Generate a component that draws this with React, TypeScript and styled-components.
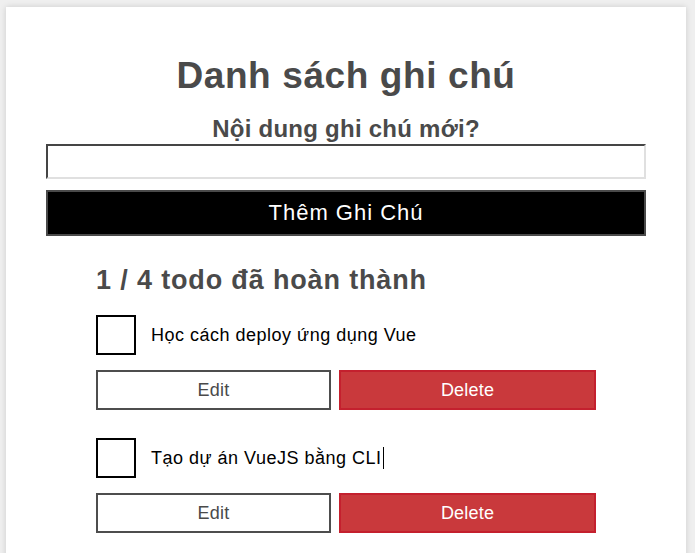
import React from "react";
import styled, { createGlobalStyle } from "styled-components";

const Global = createGlobalStyle`
  html, body { margin: 0; padding: 0; background: #efefef; }
  body { font-family: "Liberation Sans", Arial, sans-serif; }
  * { box-sizing: border-box; }
`;

const Page = styled.div`
  padding: 7px 9px 0 6px;
  height: 553px;
  overflow: hidden;
`;

const Card = styled.div`
  background: #fff;
  box-shadow: 0 0 6px rgba(0, 0, 0, 0.15);
  padding: 44px 40px 40px;
  min-height: 600px;
`;

const Title = styled.h1`
  margin: 0;
  text-align: center;
  font-size: 37px;
  letter-spacing: 0.6px;
  font-weight: bold;
  color: #4a4a4a;
  line-height: 50px;
`;

const Label = styled.label`
  display: block;
  text-align: center;
  font-size: 24px;
  letter-spacing: 0.25px;
  font-weight: bold;
  color: #4a4a4a;
  line-height: 28px;
  margin-top: 14px;
`;

const Input = styled.input`
  display: block;
  width: 100%;
  height: 35px;
  margin: 1px 0 0;
  border: 2px inset #e6e6e6;
  border-top-color: #999;
  border-left-color: #999;
  border-right-color: #e0e0e0;
  border-bottom-color: #e0e0e0;
  font-size: 18px;
  font-family: inherit;
  outline: none;
`;

const AddButton = styled.button`
  display: block;
  width: 100%;
  height: 46px;
  margin-top: 11px;
  background: #000;
  color: #fff;
  border: 2px solid #4a4a4a;
  font-family: inherit;
  font-size: 22px;
  letter-spacing: 1px;
  cursor: pointer;
`;

const List = styled.div`
  margin: 29px 50px 0;
`;

const Summary = styled.h2`
  margin: 0 0 20px;
  font-size: 27px;
  letter-spacing: 0.85px;
  font-weight: bold;
  color: #4a4a4a;
  line-height: 30px;
`;

const Item = styled.div`
  display: flex;
  flex-direction: column;
  gap: 15px;
  margin-bottom: 28px;
`;

const ItemRow = styled.div`
  display: flex;
  align-items: center;
  gap: 15px;
`;

const Check = styled.span`
  width: 40px;
  height: 40px;
  border: 2px solid #000;
  flex: none;
`;

const ItemText = styled.span<{ $caret?: boolean }>`
  font-size: 18px;
  letter-spacing: 0.5px;
  color: #000;
  line-height: 22px;
  padding-right: 1px;
  border-right: ${(p) => (p.$caret ? "1px solid #000" : "none")};
`;

const Actions = styled.div`
  display: flex;
  gap: 8px;
`;

const ActionButton = styled.button<{ $danger?: boolean }>`
  flex: 1 1 auto;
  height: 40px;
  font-family: inherit;
  font-size: 18px;
  letter-spacing: 0.2px;
  cursor: pointer;
  background: ${(p) => (p.$danger ? "#c9393c" : "#fff")};
  color: ${(p) => (p.$danger ? "#fff" : "#4a4a4a")};
  border: 2px solid ${(p) => (p.$danger ? "#c4202e" : "#4d4d4d")};
`;

const todos = [
  { text: "Học cách deploy ứng dụng Vue", caret: false },
  { text: "Tạo dự án VueJS bằng CLI", caret: true },
];

export default function App() {
  return (
    <Page>
      <Global />
      <Card>
        <Title>Danh sách ghi chú</Title>
        <Label>Nội dung ghi chú mới?</Label>
        <Input type="text" />
        <AddButton>Thêm Ghi Chú</AddButton>
        <List>
          <Summary>1 / 4 todo đã hoàn thành</Summary>
          {todos.map((t) => (
            <Item key={t.text}>
              <ItemRow>
                <Check />
                <ItemText $caret={t.caret}>{t.text}</ItemText>
              </ItemRow>
              <Actions>
                <ActionButton style={{ flexBasis: 235 }}>Edit</ActionButton>
                <ActionButton $danger style={{ flexBasis: 257 }}>
                  Delete
                </ActionButton>
              </Actions>
            </Item>
          ))}
        </List>
      </Card>
    </Page>
  );
}
